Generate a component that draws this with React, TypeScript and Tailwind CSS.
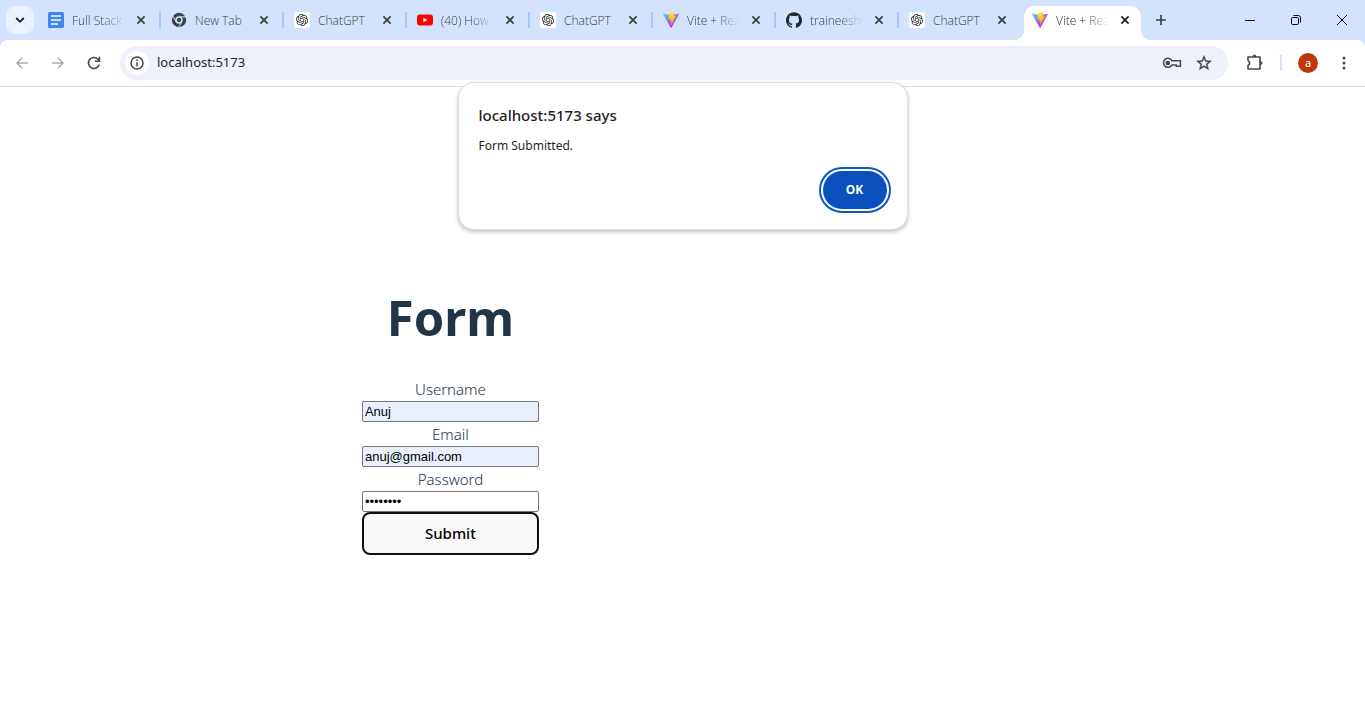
import type { ReactNode } from 'react';
import { SiGithub } from 'react-icons/si';
import { MdStarOutline } from 'react-icons/md';

function DocsIcon() {
  return (
    <svg viewBox="0 0 16 16" className="size-4">
      <rect width="16" height="16" rx="1.5" fill="#4285f4" />
      <path d="M3 4h10M3 8h10M3 12h7" stroke="#fff" strokeWidth="1.6" />
    </svg>
  );
}

function ChromeIcon() {
  return (
    <svg viewBox="0 0 16 16" className="size-4">
      <circle cx="8" cy="8" r="7.2" fill="#3f4347" />
      <circle cx="8" cy="8" r="2.9" fill="#3f4347" stroke="#d3e3fd" strokeWidth="1.5" />
      <path d="M8 4.9h7M10.8 9.8 7.6 15.4M5.2 9.8 1.6 3.8" stroke="#d3e3fd" strokeWidth="1" fill="none" />
    </svg>
  );
}

function OpenAiIcon() {
  return (
    <svg viewBox="-4 -4 32 32" className="size-4">
      <rect x="-4" y="-4" width="32" height="32" rx="4" fill="#fff" />
      <path
        fill="#222"
        d="M22.2819 9.8211a5.9847 5.9847 0 0 0-.5157-4.9108 6.0462 6.0462 0 0 0-6.5098-2.9A6.0651 6.0651 0 0 0 4.9807 4.1818a5.9847 5.9847 0 0 0-3.9977 2.9 6.0462 6.0462 0 0 0 .7427 7.0966 5.98 5.98 0 0 0 .511 4.9107 6.051 6.051 0 0 0 6.5146 2.9001A5.9847 5.9847 0 0 0 13.2599 24a6.0557 6.0557 0 0 0 5.7718-4.2058 5.9894 5.9894 0 0 0 3.9977-2.9001 6.0557 6.0557 0 0 0-.7475-7.0729zm-9.022 12.6081a4.4755 4.4755 0 0 1-2.8764-1.0408l.1419-.0804 4.7783-2.7582a.7948.7948 0 0 0 .3927-.6813v-6.7369l2.02 1.1686a.071.071 0 0 1 .038.052v5.5826a4.504 4.504 0 0 1-4.4945 4.4944zm-9.6607-4.1254a4.4708 4.4708 0 0 1-.5346-3.0137l.142.0852 4.783 2.7582a.7712.7712 0 0 0 .7806 0l5.8428-3.3685v2.3324a.0804.0804 0 0 1-.0332.0615L9.74 19.9502a4.4992 4.4992 0 0 1-6.1408-1.6464zM2.3408 7.8956a4.485 4.485 0 0 1 2.3655-1.9728V11.6a.7664.7664 0 0 0 .3879.6765l5.8144 3.3543-2.0201 1.1685a.0757.0757 0 0 1-.071 0l-4.8303-2.7865A4.504 4.504 0 0 1 2.3408 7.872zm16.5963 3.8558L13.1038 8.364 15.1192 7.2a.0757.0757 0 0 1 .071 0l4.8303 2.7913a4.4944 4.4944 0 0 1-.6765 8.1042v-5.6772a.79.79 0 0 0-.407-.667zm2.0107-3.0231l-.142-.0852-4.7735-2.7818a.7759.7759 0 0 0-.7854 0L9.409 9.2297V6.8974a.0662.0662 0 0 1 .0284-.0615l4.8303-2.7866a4.4992 4.4992 0 0 1 6.6802 4.66zM8.3065 12.863l-2.02-1.1638a.0804.0804 0 0 1-.038-.0567V6.0742a4.4992 4.4992 0 0 1 7.3757-3.4537l-.142.0805L8.704 5.459a.7948.7948 0 0 0-.3927.6813zm1.0976-2.3654l2.602-1.4998 2.6069 1.4998v2.9994l-2.5974 1.4997-2.6067-1.4997Z"
      />
    </svg>
  );
}

function YouTubeIcon() {
  return (
    <svg viewBox="0 0 16 16" className="size-4">
      <rect y="2.5" width="16" height="11" rx="3" fill="#f00" />
      <path d="M6.4 5.7v4.6l4-2.3z" fill="#fff" />
    </svg>
  );
}

function ViteIcon() {
  return (
    <svg viewBox="0 0 256 257" className="size-4">
      <defs>
        <linearGradient id="viteBody" x1="-.8%" x2="57.6%" y1="7.7%" y2="78.4%">
          <stop offset="0%" stopColor="#41D1FF" />
          <stop offset="100%" stopColor="#BD34FE" />
        </linearGradient>
        <linearGradient id="viteBolt" x1="43.4%" x2="50.3%" y1="2.2%" y2="89%">
          <stop offset="0%" stopColor="#FFEA83" />
          <stop offset="8.3%" stopColor="#FFDD35" />
          <stop offset="100%" stopColor="#FFA800" />
        </linearGradient>
      </defs>
      <path
        fill="url(#viteBody)"
        d="M255.153 37.938 134.897 252.976c-2.483 4.44-8.862 4.466-11.382.048L.875 37.958c-2.746-4.814 1.371-10.646 6.827-9.67l120.385 21.517a6.537 6.537 0 0 0 2.322-.004l117.867-21.483c5.438-.991 9.574 4.796 6.877 9.62Z"
      />
      <path
        fill="url(#viteBolt)"
        d="M185.432.063 96.44 17.501a3.268 3.268 0 0 0-2.634 3.014l-5.474 92.456a3.268 3.268 0 0 0 3.997 3.378l24.777-5.718c2.318-.535 4.413 1.507 3.936 3.838l-7.361 36.047c-.495 2.426 1.782 4.5 4.151 3.78l15.304-4.649c2.372-.72 4.652 1.36 4.15 3.788l-11.698 56.621c-.732 3.542 3.979 5.473 5.943 2.437l1.313-2.028 72.516-144.72c1.215-2.423-.88-5.186-3.54-4.672l-25.505 4.922c-2.396.462-4.435-1.77-3.759-4.114l16.646-57.705c.677-2.35-1.37-4.583-3.769-4.113Z"
      />
    </svg>
  );
}

function CrossIcon() {
  return (
    <svg viewBox="0 0 10 10" className="size-[10px]" stroke="currentColor" strokeWidth="1.7">
      <path d="m1.4 1.4 7.2 7.2M8.6 1.4 1.4 8.6" />
    </svg>
  );
}

type TabInfo = { title: string; icon: ReactNode; faded?: boolean };

const tabs: TabInfo[] = [
  { title: 'Full Stack', icon: <DocsIcon />, faded: true },
  { title: 'New Tab', icon: <ChromeIcon /> },
  { title: 'ChatGPT', icon: <OpenAiIcon /> },
  { title: '(40) How t', icon: <YouTubeIcon />, faded: true },
  { title: 'ChatGPT', icon: <OpenAiIcon /> },
  { title: 'Vite + Rea', icon: <ViteIcon />, faded: true },
  { title: 'traineeshi', icon: <SiGithub className="size-4 text-[#24292f]" />, faded: true },
  { title: 'ChatGPT', icon: <OpenAiIcon /> },
];

function TabContent({ title, icon, faded }: TabInfo) {
  return (
    <>
      <span className="shrink-0">{icon}</span>
      <span
        className={`ml-2 w-[53px] pt-px text-xs whitespace-nowrap ${
          faded ? '[mask-image:linear-gradient(to_right,black_55%,transparent)]' : ''
        }`}
      >
        {title}
      </span>
      <button type="button" aria-label={`Close ${title}`} className="ml-1 flex size-6 shrink-0 items-center justify-center">
        <CrossIcon />
      </button>
    </>
  );
}

function TabStrip() {
  return (
    <div className="flex h-10 bg-[#d3e3fd] text-[#3c3c3c]">
      <button
        type="button"
        aria-label="Search tabs"
        className="mt-[6px] mr-1 ml-[6px] flex size-7 items-center justify-center rounded-[10px] bg-[#ecf3fe] text-[#1f1f1f]"
      >
        <svg viewBox="0 0 10 10" className="size-[10px]" fill="none" stroke="currentColor" strokeWidth="1.8">
          <path d="m1.2 3 3.8 3.8L8.8 3" />
        </svg>
      </button>
      {tabs.map((tab, i) => (
        <div key={i} className="flex w-[123px] items-center pl-[10px] font-['Open_Sans','Noto_Sans',sans-serif] font-light">
          <TabContent {...tab} />
          <span className={i < tabs.length - 1 ? 'ml-auto h-4 w-[2px] bg-[#a8c7fa]' : 'hidden'} />
        </div>
      ))}
      <div className="relative mt-[6px] ml-[2px] flex w-[117px] items-center rounded-t-[10px] bg-white pl-2 font-['Open_Sans','Noto_Sans',sans-serif] font-light text-[#1f1f1f]">
        <span className="absolute right-full bottom-0 size-[10px] bg-[radial-gradient(circle_at_0_0,transparent_10px,white_10px)]" />
        <span className="absolute bottom-0 left-full size-[10px] bg-[radial-gradient(circle_at_100%_0,transparent_10px,white_10px)]" />
        <div className="flex items-center pb-[6px]">
          <TabContent title="Vite + Rea" icon={<ViteIcon />} faded />
        </div>
      </div>
      <button type="button" aria-label="New tab" className="ml-[6px] flex w-7 items-center justify-center">
        <svg viewBox="0 0 12 12" className="size-3" stroke="currentColor" strokeWidth="1.6">
          <path d="M6 1v10M1 6h10" />
        </svg>
      </button>
      <div className="ml-auto flex text-black">
        <button type="button" aria-label="Minimize" className="flex w-[46px] items-center justify-center">
          <svg viewBox="0 0 10 10" className="size-[10px]" stroke="currentColor">
            <path d="M0 5.5h10" />
          </svg>
        </button>
        <button type="button" aria-label="Restore" className="flex w-[46px] items-center justify-center">
          <svg viewBox="0 0 10 10" className="size-[10px]" fill="none" stroke="currentColor">
            <rect x=".5" y="2.5" width="7" height="7" rx="1.2" />
            <path d="M2.5.5h4.8a2.2 2.2 0 0 1 2.2 2.2v4.8" />
          </svg>
        </button>
        <button type="button" aria-label="Close window" className="flex w-[46px] items-center justify-center">
          <svg viewBox="0 0 10 10" className="size-[10px]" stroke="currentColor">
            <path d="m0 0 10 10M10 0 0 10" />
          </svg>
        </button>
      </div>
    </div>
  );
}

function Toolbar() {
  return (
    <div className="bg-[#d3e3fd]">
      <div className="flex h-[47px] items-center rounded-t-lg border-b border-[#dedfe1] bg-white text-[#474747]">
        <button type="button" aria-label="Back" className="ml-1 flex size-9 items-center justify-center text-[#a9a9a9]">
          <svg viewBox="0 0 12 12" className="size-3" fill="none" stroke="currentColor" strokeWidth="1.4">
            <path d="M12 6H1M6.2.7.9 6l5.3 5.3" />
          </svg>
        </button>
        <button type="button" aria-label="Forward" className="flex size-9 items-center justify-center text-[#a9a9a9]">
          <svg viewBox="0 0 12 12" className="size-3" fill="none" stroke="currentColor" strokeWidth="1.4">
            <path d="M0 6h11M5.8.7 11.1 6l-5.3 5.3" />
          </svg>
        </button>
        <button type="button" aria-label="Reload" className="flex size-9 items-center justify-center">
          <svg viewBox="0 0 14 14" className="size-[14px]" fill="none" stroke="currentColor" strokeWidth="1.6">
            <path d="M12.3 8.4A5.5 5.5 0 1 1 10.9 3.1L12.6 4.8" />
            <path d="M12.4.8v4.5H7.9" />
          </svg>
        </button>
        <div className="ml-2 flex h-[34px] flex-1 items-center rounded-full bg-[#ecf1fa]">
          <button
            type="button"
            aria-label="Site information"
            className="ml-[5px] flex size-6 items-center justify-center rounded-full bg-white"
          >
            <svg viewBox="0 0 14 14" className="size-[14px]" fill="none" stroke="currentColor" strokeWidth="1.5">
              <circle cx="7" cy="7" r="6" />
              <path d="M7 6.2v4.2M7 3.6v1.5" />
            </svg>
          </button>
          <input
            aria-label="Address"
            defaultValue="localhost:5173"
            className="ml-2 min-w-0 flex-1 bg-transparent text-[13px] text-[#1f1f1f] outline-none"
          />
          <button type="button" aria-label="Passwords" className="flex w-8 items-center justify-center">
            <svg viewBox="0 0 20 12" className="h-3 w-5" fill="none" stroke="currentColor" strokeWidth="1.5">
              <path d="M10 3.8H18.4V9.3H14.4V7.9H10A4.5 4.5 0 1 1 10 3.8Z" />
              <circle cx="5.8" cy="6" r="1.6" fill="currentColor" />
            </svg>
          </button>
          <button type="button" aria-label="Bookmark this page" className="mr-2 flex w-8 items-center justify-center">
            <MdStarOutline className="size-[18px]" stroke="currentColor" strokeWidth="0.5" />
          </button>
        </div>
        <button type="button" aria-label="Extensions" className="ml-[9px] flex size-9 items-center justify-center">
          <svg viewBox="0 0 18 18" className="size-[18px]" fill="none" stroke="currentColor" strokeWidth="1.6">
            <path d="M2 3h12v12H2v-3.6a2.6 2.6 0 0 0 0-4.8z" strokeLinejoin="round" />
            <path d="M7 2.5a1.5 1.5 0 0 1 3 0zM14.5 7.5a1.5 1.5 0 0 1 0 3z" fill="currentColor" strokeWidth="1" />
          </svg>
        </button>
        <span className="ml-[7px] h-4 w-[2px] bg-[#d3e3fd]" />
        <button
          type="button"
          aria-label="Profile"
          className="ml-4 flex size-5 items-center justify-center rounded-full bg-[#bf360c] text-[11px] text-white"
        >
          a
        </button>
        <button type="button" aria-label="Menu" className="mr-[3px] ml-2 flex size-9 items-center justify-center">
          <svg viewBox="0 0 4 14" className="h-[14px] w-1" fill="currentColor">
            <circle cx="2" cy="2" r="1.5" />
            <circle cx="2" cy="7" r="1.5" />
            <circle cx="2" cy="12" r="1.5" />
          </svg>
        </button>
      </div>
    </div>
  );
}

function AlertDialog() {
  return (
    <div
      role="alertdialog"
      aria-labelledby="alert-title"
      className="absolute inset-x-0 top-[82px] mx-auto flex w-[450px] flex-col rounded-2xl border border-[#dcdcdc] bg-white px-5 py-5 shadow-[0_2px_4px_rgba(0,0,0,0.25)]"
    >
      <h2 id="alert-title" className="text-[15px] leading-6 font-medium text-[#1f1f1f]">
        localhost:5173 says
      </h2>
      <p className="mt-2 text-xs leading-[22px] text-[#1f1f1f]">Form Submitted.</p>
      <button
        type="button"
        className="mt-[14px] h-[38px] w-16 self-end rounded-full bg-[#0b50bd] text-xs font-bold text-white outline-2 outline-offset-2 outline-[#0b57d0]"
      >
        OK
      </button>
    </div>
  );
}

const fields = [
  { id: 'username', label: 'Username', type: 'text', value: 'Anuj', tone: 'bg-[#e8f0fe]' },
  { id: 'email', label: 'Email', type: 'email', value: 'anuj@gmail.com', tone: 'bg-[#e8f0fe]' },
  { id: 'password', label: 'Password', type: 'password', value: 'password', tone: 'bg-white' },
];

export default function App() {
  return (
    <div className="relative min-h-screen bg-white font-['Noto_Sans','Open_Sans',sans-serif]">
      <header>
        <TabStrip />
        <Toolbar />
      </header>
      <main className="flex w-[66%] flex-col items-center pt-[202px] text-[#213547]">
        <h1 className="text-[49px] leading-[56px] font-bold">Form</h1>
        <form className="mt-8 flex w-[177px] flex-col" onSubmit={(e) => e.preventDefault()}>
          {fields.map((f) => (
            <div key={f.id} className="flex flex-col">
              <label htmlFor={f.id} className="text-center text-[15px] leading-6 font-light">
                {f.label}
              </label>
              <input
                id={f.id}
                type={f.type}
                defaultValue={f.value}
                className={`h-[21px] rounded-xs border border-[#767676] px-[2px] font-['Liberation_Sans',Arial,sans-serif] text-[13px] text-black outline-none ${f.tone}`}
              />
            </div>
          ))}
          <button
            type="submit"
            className="h-[43px] rounded-lg border-2 border-[#101010] bg-[#f9f9f9] text-[15px] font-medium text-black"
          >
            Submit
          </button>
        </form>
      </main>
      <AlertDialog />
    </div>
  );
}
